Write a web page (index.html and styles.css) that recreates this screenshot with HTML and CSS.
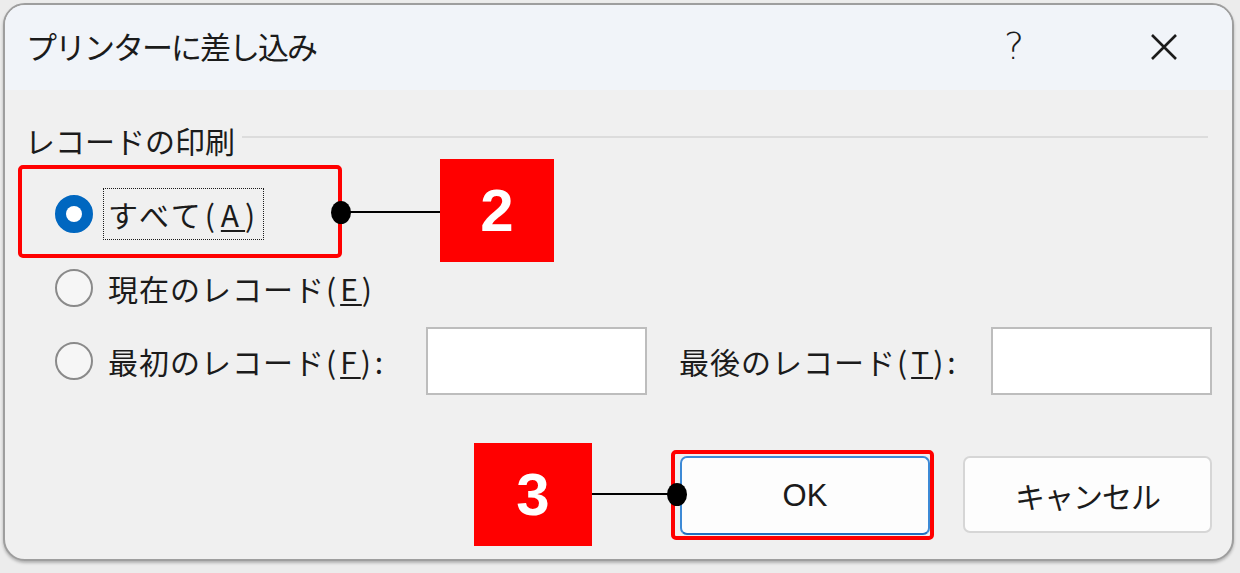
FILE: index.html
```html
<!DOCTYPE html>
<html lang="ja">
<head>
<meta charset="utf-8">
<title>プリンターに差し込み</title>
<link rel="stylesheet" href="styles.css">
</head>
<body>
<div class="dialog">
  <div class="titlebar">
    <div class="title">プリンターに差し込み</div>
    <div class="help">?</div>
    <div class="close">
      <svg width="28" height="28" viewBox="0 0 28 28"><path d="M2 2 L26 26 M26 2 L2 26" stroke="#1b1b1b" stroke-width="2.6" fill="none"/></svg>
    </div>
  </div>
  <div class="content">
    <div class="group-head">
      <span class="group-label">レコードの印刷</span>
      <div class="group-rule"></div>
    </div>
    <div class="row">
      <span class="radio checked"><span class="dot"></span></span>
      <span class="label focus">すべて<span class="key">(<u>A</u>)</span></span>
    </div>
    <div class="row">
      <span class="radio"></span>
      <span class="label">現在のレコード<span class="key">(<u>E</u>)</span></span>
    </div>
    <div class="row range">
      <span class="radio"></span>
      <span class="label first">最初のレコード<span class="key">(<u>F</u>):</span></span>
      <span class="textbox"></span>
      <span class="label last">最後のレコード<span class="key">(<u>T</u>):</span></span>
      <span class="textbox"></span>
    </div>
    <div class="buttons">
      <div class="btn ok">OK</div>
      <div class="btn cancel">キャンセル</div>
    </div>
  </div>

  <div class="anno box box-all"></div>
  <div class="anno line line-2"></div>
  <div class="anno pin pin-2"></div>
  <div class="anno step step-2">2</div>

  <div class="anno box box-ok"></div>
  <div class="anno line line-3"></div>
  <div class="anno pin pin-3"></div>
  <div class="anno step step-3">3</div>
</div>
</body>
</html>
```

FILE: styles.css
```css
html, body {
  margin: 0;
  padding: 0;
}
body {
  width: 1240px;
  height: 573px;
  overflow: hidden;
  background: #ececec;
  font-family: "Noto Sans CJK JP", "Noto Sans", sans-serif;
  color: #1b1b1b;
}
.dialog {
  position: relative;
  box-sizing: border-box;
  margin: 3px 0 0 3px;
  width: 1231px;
  height: 558px;
  border: 2px solid #9e9e9e;
  border-radius: 22px;
  background: #f0f0f0;
  box-shadow: 0 2px 3px rgba(0,0,0,0.25);
}
.titlebar {
  display: flex;
  align-items: center;
  height: 85px;
  background: #f1f4f9;
  border-radius: 20px 20px 0 0;
  padding-left: 21px;
}
.title {
  flex: 1;
  font-size: 31px;
  letter-spacing: -2px;
  padding-bottom: 4px;
}
.help {
  font-family: "DejaVu Sans", sans-serif;
  font-size: 38px;
  font-weight: 300;
  width: 26px;
  margin-right: 120px;
  padding-bottom: 4px;
}
.close {
  width: 28px;
  height: 28px;
  margin-right: 54px;
  margin-bottom: 2px;
}
.close svg { display: block; }

.content {
  padding: 30px 20px 0 20px;
}
.group-head {
  display: flex;
  align-items: center;
  height: 40px;
}
.group-label {
  font-size: 30px;
  white-space: nowrap;
}
.group-rule {
  flex: 1;
  height: 2px;
  background: #dcdcdc;
  margin-left: 7px;
  margin-right: 4px;
  margin-top: -6px;
}
.row {
  display: flex;
  align-items: center;
  height: 74px;
  padding-left: 30px;
}
.group-head + .row { margin-top: 17px; }
.row.range { height: 72px; }
.radio {
  box-sizing: border-box;
  width: 38px;
  height: 38px;
  border-radius: 50%;
  border: 2px solid #8a8a8a;
  background: #f6f6f6;
  display: flex;
  align-items: center;
  justify-content: center;
  flex: none;
}
.radio.checked {
  border: 11px solid #0067c0;
  background: #0067c0;
}
.radio .dot {
  width: 16px;
  height: 16px;
  border-radius: 50%;
  background: #fff;
  flex: none;
}
.label {
  font-size: 30px;
  letter-spacing: 1px;
  margin-left: 15px;
  white-space: nowrap;
  line-height: 40px;
}
.label .key {
  letter-spacing: 4px;
  margin-left: 1px;
}
.label u {
  text-decoration-thickness: 2px;
  text-underline-offset: 3px;
}
.label.focus {
  margin-left: 10px;
  padding: 5px 2px 5px 4px;
  border: 1px dotted #1b1b1b;
  letter-spacing: 3px;
}
.label.focus .key { letter-spacing: 6px; }
.label.first {
  width: 318px;
  box-sizing: border-box;
}
.label.last {
  width: 312px;
  box-sizing: border-box;
  margin-left: 32px;
}
.textbox {
  box-sizing: border-box;
  width: 221px;
  height: 68px;
  background: #fff;
  border: 2px solid #bdbdbd;
  flex: none;
}
.buttons {
  display: flex;
  justify-content: flex-end;
  gap: 33px;
  margin-top: 59px;
}
.btn {
  box-sizing: border-box;
  width: 250px;
  height: 79px;
  border-radius: 7px;
  display: flex;
  align-items: center;
  justify-content: center;
  font-size: 30px;
  background: #fdfdfd;
}
.btn.ok {
  border: 2px solid #3d8ad6;
  border-bottom-color: #1f6fc0;
  font-family: "Liberation Sans", "Noto Sans CJK JP", sans-serif;
  font-size: 31px;
}
.btn.cancel {
  width: 249px;
  height: 77px;
  border: 2px solid #d6d6d6;
  letter-spacing: -1px;
}

/* annotations overlaid on the screenshot */
.anno { position: absolute; }
.box {
  box-sizing: border-box;
  border: 4px solid #ff0000;
  border-radius: 5px;
}
.box-all { left: 13px; top: 160px; width: 324px; height: 93px; }
.box-ok { left: 666px; top: 445px; width: 263px; height: 90px; }
.line { height: 2px; background: #000; }
.line-2 { left: 336px; top: 206px; width: 99px; }
.line-3 { left: 587px; top: 488px; width: 85px; }
.pin {
  width: 20px;
  height: 23px;
  border-radius: 50%;
  background: #000;
}
.pin-2 { left: 326px; top: 196px; }
.pin-3 { left: 662px; top: 478px; }
.step {
  background: #ff0000;
  color: #fff;
  font-family: "Liberation Sans", sans-serif;
  font-weight: bold;
  font-size: 60px;
  display: flex;
  align-items: center;
  justify-content: center;
}
.step-2 { left: 435px; top: 154px; width: 114px; height: 103px; }
.step-3 { left: 469px; top: 438px; width: 118px; height: 103px; }
```
